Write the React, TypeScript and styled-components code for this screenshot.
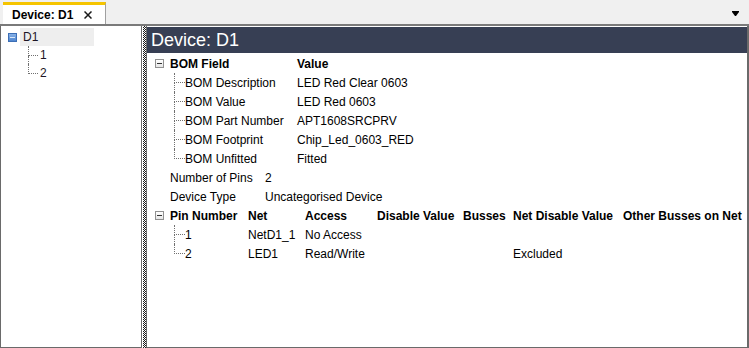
import React from 'react'
import styled, { createGlobalStyle } from 'styled-components'

const GlobalStyle = createGlobalStyle`
  html, body {
    margin: 0;
    padding: 0;
  }
  body {
    font-family: 'Liberation Sans', Arial, sans-serif;
    font-size: 12px;
    color: #000;
  }
`

const Window = styled.div`
  width: 749px;
  height: 348px;
  display: flex;
  flex-direction: column;
  background: #f0f0f0;
  overflow: hidden;
`

const TabStrip = styled.div`
  height: 24px;
  flex: none;
  display: flex;
  align-items: flex-end;
  justify-content: space-between;
  padding-left: 3px;
  border-bottom: 2px solid #7a7a7a;
`

const Tab = styled.div`
  width: 93px;
  height: 19px;
  box-sizing: content-box;
  border-top: 3px solid #f5c400;
  border-right: 1px solid #a0a0a0;
  background: #fff;
  display: flex;
  align-items: center;
  padding-left: 9px;
  gap: 11px;
  font-weight: bold;
  font-size: 12px;
`

const TabMenu = styled.div`
  width: 7px;
  height: 5px;
  margin: 0 10px 8px 0;
  display: flex;
`

const Body = styled.div`
  flex: 1;
  display: flex;
  min-height: 0;
`

const SidePanel = styled.div`
  width: 142px;
  box-sizing: border-box;
  background: #fff;
  border-left: 1px solid #6a6a6a;
  border-right: 1px solid #6a6a6a;
  border-bottom: 1px solid #6a6a6a;
  padding-top: 2px;
`

const Splitter = styled.div`
  width: 3px;
  border-left: 1px solid #fff;
  background: repeating-conic-gradient(#1a1a1a 0 25%, #fff 0 50%) 0 0 / 2px 2px;
`

const MainPanel = styled.div`
  flex: 1;
  background: #fff;
  border-left: 1px solid #6a6a6a;
  border-right: 2px solid #6a6a6a;
  border-bottom: 1px solid #6a6a6a;
  padding-top: 1px;
`

const Banner = styled.div`
  height: 26px;
  line-height: 26px;
  background: #373f54;
  color: #fff;
  font-size: 18px;
  padding-left: 4px;
`

const Grid = styled.div`
  margin-top: 1px;
  padding-left: 8px;
`

const Row = styled.div<{ $cols: string; $bold?: boolean }>`
  display: grid;
  grid-template-columns: ${p => p.$cols};
  height: 19px;
  align-items: center;
  font-weight: ${p => (p.$bold ? 'bold' : 'normal')};
  white-space: nowrap;
`

const Expander = styled.span`
  width: 7px;
  height: 7px;
  border: 1px solid #919191;
  background: linear-gradient(#fff, #e6e6e6);
  display: flex;
  align-items: center;
  justify-content: center;
  &::after {
    content: '';
    width: 5px;
    height: 1px;
    background: #333;
  }
`

const Link = styled.span<{ $last?: boolean; $offset: number; $reach: number }>`
  display: flex;
  flex-direction: column;
  height: 100%;
  padding-left: ${p => p.$offset}px;
  & > span:first-child {
    flex: 1;
    width: ${p => p.$reach}px;
    border-left: 1px dotted #707070;
    border-bottom: 1px dotted #707070;
  }
  & > span:last-child {
    flex: 1;
    border-left: 1px dotted ${p => (p.$last ? 'transparent' : '#707070')};
  }
`

const TreeRow = styled.div<{ $indent: number }>`
  display: flex;
  align-items: center;
  height: 18px;
  padding-left: ${p => p.$indent}px;
  color: #1c1424;
`

const BlueExpander = styled.span`
  width: 7px;
  height: 7px;
  border: 1px solid #3d6fb6;
  background: linear-gradient(#86b0e6, #4f86d0);
  display: flex;
  align-items: center;
  justify-content: center;
  &::after {
    content: '';
    width: 5px;
    height: 1px;
    background: #dbe8f8;
  }
`

const Selected = styled.span`
  width: 74px;
  height: 18px;
  line-height: 18px;
  margin-left: 3px;
  padding-left: 3px;
  box-sizing: border-box;
  background: #eeeeee;
`

const TreeLabel = styled.span`
  margin-left: 2px;
`

const TreeLink = ({ last, offset, reach }: { last?: boolean; offset: number; reach: number }) => (
  <Link $last={last} $offset={offset} $reach={reach}>
    <span />
    <span />
  </Link>
)

const bomFields: [string, string][] = [
  ['BOM Description', 'LED Red Clear 0603'],
  ['BOM Value', 'LED Red 0603'],
  ['BOM Part Number', 'APT1608SRCPRV'],
  ['BOM Footprint', 'Chip_Led_0603_RED'],
  ['BOM Unfitted', 'Fitted'],
]

const pins = [
  { pin: '1', net: 'NetD1_1', access: 'No Access', disable: '', busses: '', netDisable: '', other: '' },
  { pin: '2', net: 'LED1', access: 'Read/Write', disable: '', busses: '', netDisable: 'Excluded', other: '' },
]

const bomCols = '15px 127px 1fr'
const bomChildCols = '15px 15px 112px 1fr'
const propCols = '15px 95px 1fr'
const pinCols = '15px 78px 57px 72px 86px 50px 110px 1fr'
const pinChildCols = '15px 15px 63px 57px 72px 86px 50px 110px 1fr'

function App(): JSX.Element {
  return (
    <Window>
      <GlobalStyle />
      <TabStrip>
        <Tab>
          <span>Device: D1</span>
          <svg width="8" height="8" viewBox="0 0 8 8">
            <path d="M0.5 0.5 L7.5 7.5 M7.5 0.5 L0.5 7.5" stroke="#1a1a1a" strokeWidth="1.5" />
          </svg>
        </Tab>
        <TabMenu>
          <svg width="7" height="5" viewBox="0 0 7 5">
            <path d="M0 0 H7 V1 L4 5 H3 L0 1 Z" fill="#000" />
          </svg>
        </TabMenu>
      </TabStrip>
      <Body>
        <SidePanel>
          <TreeRow $indent={7}>
            <BlueExpander />
            <Selected>D1</Selected>
          </TreeRow>
          <TreeRow $indent={27}>
            <TreeLink offset={0} reach={9} />
            <TreeLabel>1</TreeLabel>
          </TreeRow>
          <TreeRow $indent={27}>
            <TreeLink last offset={0} reach={9} />
            <TreeLabel>2</TreeLabel>
          </TreeRow>
        </SidePanel>
        <Splitter />
        <MainPanel>
          <Banner>Device: D1</Banner>
          <Grid>
            <Row $cols={bomCols} $bold>
              <Expander />
              <span>BOM Field</span>
              <span>Value</span>
            </Row>
            {bomFields.map(([field, value], i) => (
              <Row key={field} $cols={bomChildCols}>
                <span />
                <TreeLink last={i === bomFields.length - 1} offset={4} reach={10} />
                <span>{field}</span>
                <span>{value}</span>
              </Row>
            ))}
            <Row $cols={propCols}>
              <span />
              <span>Number of Pins</span>
              <span>2</span>
            </Row>
            <Row $cols={propCols}>
              <span />
              <span>Device Type</span>
              <span>Uncategorised Device</span>
            </Row>
            <Row $cols={pinCols} $bold>
              <Expander />
              <span>Pin Number</span>
              <span>Net</span>
              <span>Access</span>
              <span>Disable Value</span>
              <span>Busses</span>
              <span>Net Disable Value</span>
              <span>Other Busses on Net</span>
            </Row>
            {pins.map((p, i) => (
              <Row key={p.pin} $cols={pinChildCols}>
                <span />
                <TreeLink last={i === pins.length - 1} offset={4} reach={10} />
                <span>{p.pin}</span>
                <span>{p.net}</span>
                <span>{p.access}</span>
                <span>{p.disable}</span>
                <span>{p.busses}</span>
                <span>{p.netDisable}</span>
                <span>{p.other}</span>
              </Row>
            ))}
          </Grid>
        </MainPanel>
      </Body>
    </Window>
  )
}

export default App
